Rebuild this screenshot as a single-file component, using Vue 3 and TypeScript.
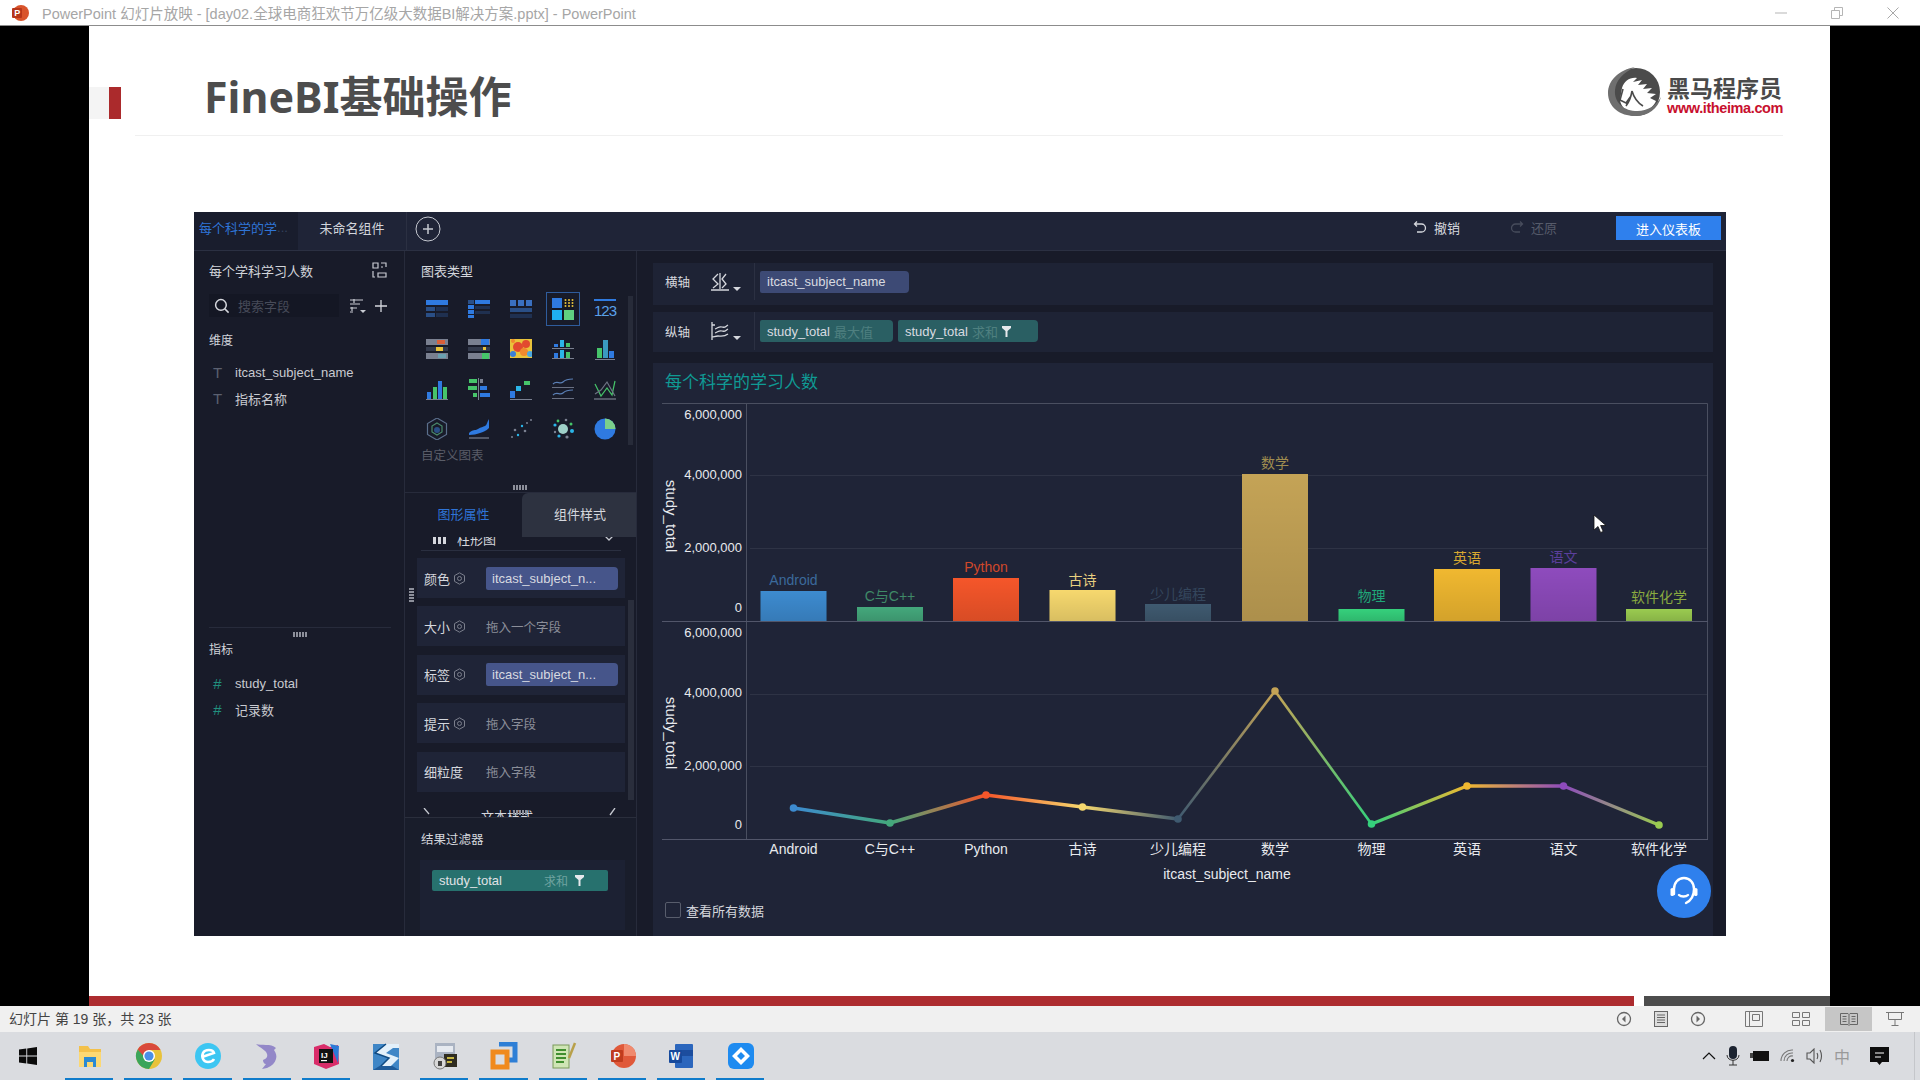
<template>
  <div class="screen">
    <div class="titlebar">
      <svg class="ppt-mini" width="18" height="18" viewBox="0 0 18 18">
        <circle cx="10" cy="9" r="8" fill="#d9542b" />
        <rect x="1" y="4" width="10" height="10" rx="1" fill="#b7361a" />
        <text x="3.2" y="12.4" font-size="9" font-weight="700" fill="#fff" font-family="Liberation Sans">P</text>
      </svg>
      <span class="title-text">PowerPoint 幻灯片放映 - [day02.全球电商狂欢节万亿级大数据BI解决方案.pptx] - PowerPoint</span>
      <div class="win-btns">
        <svg width="14" height="14" viewBox="0 0 14 14"><path d="M1 7h12" stroke="#b5b5b5" /></svg>
        <svg width="14" height="14" viewBox="0 0 14 14" fill="none" stroke="#b5b5b5"><path d="M1.5 4.5h8v8h-8zM4.5 4.5v-3h8v8h-3" /></svg>
        <svg width="14" height="14" viewBox="0 0 14 14"><path d="M1.5 1.5l11 11M12.5 1.5l-11 11" stroke="#a8a8a8" /></svg>
      </div>
    </div>

    <div class="stage">
      <div class="slide">
        <div class="slide-head">
          <div class="mark"><i></i></div>
          <h1 class="slide-title">FineBI基础操作</h1>
          <div class="logo">
            <svg width="54" height="50" viewBox="0 0 54 50">
              <circle cx="28" cy="25" r="24" fill="#4b4b4b" />
              <path d="M12 33l2-12c2-7 8-11 15-10l-4 4 9-2-4 5 9-1-4 5 9-1-5 5 9 1-6 4 6 3c-2 5-9 12-18 12-11 1-17-6-18-13z" fill="#fff" />
              <path d="M15 22l-3 11 6 3 5-7M24 24c-1 6-3 11-6 15M24 24c2 7 6 12 11 15" fill="none" stroke="#4b4b4b" stroke-width="1.6" />
              <path d="M27 0C10 3 0 14 0 26c0 14 12 23 27 23 13 0 23-7 26-19-5 9-15 15-26 14C14 43 6 34 7 23 8 13 15 6 27 0z" fill="#6f6f6f" />
            </svg>
            <div class="logo-text">
              <div class="logo-cn">黑马程序员</div>
              <div class="logo-url">www.itheima.com</div>
            </div>
          </div>
        </div>
        <div class="head-rule"></div>

        <div class="bi">
          <div class="bi-top">
            <div class="bi-tab current">每个科学的学<span class="tab-more">...</span></div>
            <div class="bi-tab">未命名组件</div>
            <div class="add-tab">
              <svg width="26" height="26" viewBox="0 0 26 26" fill="none" stroke="#c5c8d0">
                <circle cx="13" cy="13" r="12" />
                <path d="M8 13h10M13 8v10" stroke-width="1.5" />
              </svg>
            </div>
            <div class="bi-actions">
              <div class="act undo">
                <svg width="14" height="14" viewBox="0 0 14 14" fill="none" stroke="#d5d7dd" stroke-width="1.3"><path d="M4 1.5L1.5 4 4 6.5M1.5 4h7a3.8 3.8 0 0 1 0 8H4" /></svg>
                <span>撤销</span>
              </div>
              <div class="act off">
                <svg width="14" height="14" viewBox="0 0 14 14" fill="none" stroke="#474c5c" stroke-width="1.3"><path d="M10 1.5L12.5 4 10 6.5M12.5 4h-7a3.8 3.8 0 0 0 0 8H10" /></svg>
                <span>还原</span>
              </div>
              <button class="enter-btn">进入仪表板</button>
            </div>
          </div>

          <div class="bi-body">
            <aside class="fields">
              <div class="fields-upper">
                <div class="fields-title">
                  <span>每个学科学习人数</span>
                  <svg width="15" height="16" viewBox="0 0 15 16" fill="none" stroke="#c9ccd3" stroke-width="1.2"><path d="M1 6V1h5v5zM9 1h5v4M14 11v4H6v-4h8zM1 9v6h2M9 5h2" /></svg>
                </div>
                <div class="search-row">
                  <div class="search">
                    <svg width="16" height="16" viewBox="0 0 15 15" fill="none" stroke="#d5d7dd" stroke-width="1.4"><circle cx="6.5" cy="6.5" r="5" /><path d="M10.2 10.2l3.5 3.5" /></svg>
                    <span>搜索字段</span>
                  </div>
                  <svg class="sort" width="18" height="16" viewBox="0 0 18 16" fill="none" stroke="#c9ccd3" stroke-width="1.2"><path d="M1 2h13M1 6h10M1 10h7M1 14h3M5 1v4M3 9v4" /><path d="M11 12h6l-3 3z" fill="#c9ccd3" stroke="none" /></svg>
                  <svg class="plus" width="14" height="14" viewBox="0 0 14 14"><path d="M1 7h12M7 1v12" stroke="#d5d7dd" stroke-width="1.3" /></svg>
                </div>
                <div class="group-name">维度</div>
                <div class="field-row"><span class="field-t">T</span>itcast_subject_name</div>
                <div class="field-row"><span class="field-t">T</span>指标名称</div>
              </div>
              <div class="dots-h"></div>
              <div class="group-name second">指标</div>
              <div class="field-row num"><span class="field-n">#</span>study_total</div>
              <div class="field-row num"><span class="field-n">#</span>记录数</div>
            </aside>

            <section class="config">
              <div class="types">
                <div class="types-title">图表类型</div>
                <div class="type-grid">
                  <div v-for="(ic, i) in chartIcons" :key="i" class="type-cell" :class="{ picked: i === 3 }">
                    <svg width="22" height="22" viewBox="0 0 22 22">
                      <rect v-for="(r, k) in ic.r" :key="'r' + k" :x="r[0]" :y="r[1]" :width="r[2]" :height="r[3]" :fill="String(r[4])" />
                      <circle v-for="(c, k) in ic.c" :key="'c' + k" :cx="c[0]" :cy="c[1]" :r="c[2]" :fill="String(c[3])" />
                      <path v-for="(p, k) in ic.p" :key="'p' + k" :d="p[0]" :fill="p[2] || 'none'" :stroke="p[1]" stroke-width="1.2" />
                    </svg>
                    <span v-if="ic.t" class="type-num">{{ ic.t }}</span>
                  </div>
                </div>
                <div class="custom">自定义图表</div>
                <div class="dots-h small"></div>
                <div class="types-scroll"></div>
              </div>
              <div class="prop-tabs">
                <div class="prop-tab blue">图形属性</div>
                <div class="prop-tab active">组件样式</div>
              </div>
              <div class="props">
                <div class="clip-top">
                  <div class="clip-inner">
                    <svg width="14" height="12" viewBox="0 0 14 12" fill="#d5d7dd"><rect x="0" y="2" width="3" height="10" /><rect x="5" y="0" width="3" height="12" /><rect x="10" y="5" width="3" height="7" /></svg>
                    <span>柱形图</span>
                    <svg class="chev" width="12" height="8" viewBox="0 0 12 8" fill="none" stroke="#c5c8d0" stroke-width="1.3"><path d="M1 1l5 5 5-5" /></svg>
                  </div>
                </div>
                <div v-for="row in propRows" :key="row.name" class="prop-row">
                  <span class="prop-name">{{ row.name }}</span>
                  <svg v-if="row.gear" class="gear" width="13" height="13" viewBox="0 0 13 13" fill="none" stroke="#7b7f8c"><path d="M6.5 .8l5 2.85v5.7l-5 2.85-5-2.85v-5.7z" /><circle cx="6.5" cy="6.5" r="2" /></svg>
                  <span v-if="row.pill" class="prop-pill">{{ row.pill }}</span>
                  <span v-else class="prop-hint">{{ row.hint }}</span>
                </div>
                <div class="clip-bottom">
                  <svg width="8" height="8" viewBox="0 0 8 8" fill="none" stroke="#c5c8d0" stroke-width="1.3"><path d="M1 0l5 6" /></svg>
                  <span class="clip-text">文本样式</span>
                  <svg class="chev" width="8" height="8" viewBox="0 0 8 8" fill="none" stroke="#c5c8d0" stroke-width="1.3"><path d="M1 7l5-7" /></svg>
                </div>
                <div class="props-scroll"></div>
              </div>
              <div class="dots-v"></div>
              <div class="dots-h lower"></div>
              <div class="filter-box">
                <div class="filter-title">结果过滤器</div>
                <div class="filter-well">
                  <div class="filter-pill">
                    <span>study_total</span>
                    <em>求和</em>
                    <svg width="9" height="11" viewBox="0 0 9 11" fill="#e6e8ec"><path d="M0 0h9v2L5.5 5v6h-2V5L0 2z" /></svg>
                  </div>
                </div>
              </div>
            </section>

            <main class="canvas">
              <div class="axis-row first">
                <span class="axis-name">横轴</span>
                <svg class="axis-ic" width="20" height="20" viewBox="0 0 20 20" fill="none" stroke="#d5d7dd" stroke-width="1.3"><path d="M8 2L3 7l5 5-5 4M16 2l-4 5 4 5-4 4M1 18h18M10 1v16" /></svg>
                <i class="caret"></i>
                <div class="axis-slots">
                  <span class="pill dim-pill wide">itcast_subject_name</span>
                </div>
              </div>
              <div class="axis-row second">
                <span class="axis-name">纵轴</span>
                <svg class="axis-ic" width="20" height="20" viewBox="0 0 20 20" fill="none" stroke="#d5d7dd" stroke-width="1.3"><path d="M2 1v18M5 8c3-1 4-3 7-2s3 0 6-2M5 12c3-1 4-3 7-2s3 0 6-2M2 4h3M2 16c2 0 3-1 6-1s6 1 10-2" /></svg>
                <i class="caret"></i>
                <div class="axis-slots">
                  <span class="pill val-pill">study_total <em>最大值</em></span>
                  <span class="pill val-pill">study_total <em>求和</em>
                    <svg width="9" height="11" viewBox="0 0 9 11" fill="#e6e8ec"><path d="M0 0h9v2L5.5 5v6h-2V5L0 2z" /></svg>
                  </span>
                </div>
              </div>

              <div class="card">
                <div class="card-title">每个科学的学习人数</div>
                <svg class="plot" width="1059" height="496" viewBox="653 403 1059 496" font-family="Liberation Sans, Noto Sans CJK SC, sans-serif">
                  <defs>
                    <linearGradient id="shade" x1="0" y1="0" x2="0" y2="1">
                      <stop offset="0" stop-color="#000" stop-opacity="0" />
                      <stop offset="1" stop-color="#000" stop-opacity=".12" />
                    </linearGradient>
                    <linearGradient v-for="s in segments" :id="s.id" :key="s.id" gradientUnits="userSpaceOnUse" :x1="s.x1" :y1="s.y1" :x2="s.x2" :y2="s.y2">
                      <stop offset="0" :stop-color="s.c1" />
                      <stop offset="1" :stop-color="s.c2" />
                    </linearGradient>
                  </defs>

                  <path d="M662 403.5H1707.5V839M746.5 403V839" fill="none" stroke="#4a4f60" />
                  <path d="M750 475.5H1707M750 548.5H1707M750 694.5H1707M750 766.5H1707" stroke="#2e3345" />
                  <path d="M662 621.5H1708M662 839.5H1708" stroke="#52566a" />

                  <text v-for="t in ticks" :key="t.y" x="742" :y="t.y" text-anchor="end" font-size="13" fill="#e8eaee">{{ t.label }}</text>
                  <text transform="translate(666 516) rotate(90)" text-anchor="middle" font-size="15" fill="#e8eaee">study_total</text>
                  <text transform="translate(666 733) rotate(90)" text-anchor="middle" font-size="15" fill="#e8eaee">study_total</text>

                  <g v-for="c in cats" :key="c.name">
                    <rect :x="c.x - 33" :y="c.top" width="66" :height="621 - c.top" :fill="c.color" />
                    <rect :x="c.x - 33" :y="c.top" width="66" :height="621 - c.top" fill="url(#shade)" />
                    <text :x="c.x" :y="c.labelY + 5" text-anchor="middle" font-size="14" :fill="c.labelColor">{{ c.name }}</text>
                    <text :x="c.x" y="854" text-anchor="middle" font-size="14" fill="#e8eaee">{{ c.name }}</text>
                  </g>

                  <line v-for="s in segments" :key="'l' + s.id" :x1="s.x1" :y1="s.y1" :x2="s.x2" :y2="s.y2" :stroke="`url(#${s.id})`" :stroke-width="s.w" />
                  <circle v-for="c in cats" :key="'d' + c.name" :cx="c.x" :cy="c.lineY" r="3.8" :fill="c.color" />

                  <text x="1227" y="879" text-anchor="middle" font-size="14" fill="#e8eaee">itcast_subject_name</text>
                </svg>
                <label class="see-all"><i class="box"></i>查看所有数据</label>

                <div class="help">
                  <svg width="32" height="34" viewBox="0 0 32 34" fill="none" stroke="#fff" stroke-width="2.4">
                    <path d="M6 20V15C6 9 10 4 16 4s10 5 10 11c0 6-2 11-8 14" stroke-linecap="round" />
                    <rect x="2.5" y="14" width="3.5" height="8" rx="1.6" fill="#fff" stroke="none" />
                    <rect x="26" y="14" width="3.5" height="8" rx="1.6" fill="#fff" stroke="none" />
                    <path d="M11 21c2 2 7 2 9 0" stroke-linecap="round" />
                  </svg>
                </div>
                <svg class="pointer" width="14" height="20" viewBox="0 0 14 20"><path d="M1 1v15l4-3.5 2.6 6 2.6-1.1-2.6-5.9H13z" fill="#fff" stroke="#111" stroke-width=".8" /></svg>
              </div>
            </main>
          </div>
        </div>
      </div>
    </div>

    <div class="progress"><i></i><b></b></div>

    <div class="statusbar">
      <span>幻灯片 第 19 张，共 23 张</span>
      <div class="views">
        <svg width="16" height="16" viewBox="0 0 16 16" fill="none" stroke="#666" stroke-width="1.3"><circle cx="8" cy="8" r="6.5" /><path d="M9.5 4.5L6 8l3.5 3.5z" fill="#666" stroke="none" /></svg>
        <svg width="14" height="16" viewBox="0 0 14 16" fill="none" stroke="#666"><rect x=".5" y=".5" width="13" height="15" fill="#ddd" /><path d="M3 4h8M3 6.5h8M3 9h8M3 11.5h8" /></svg>
        <svg width="16" height="16" viewBox="0 0 16 16" fill="none" stroke="#666" stroke-width="1.3"><circle cx="8" cy="8" r="6.5" /><path d="M6.5 4.5L10 8l-3.5 3.5z" fill="#666" stroke="none" /></svg>
        <svg width="18" height="16" viewBox="0 0 18 16" fill="none" stroke="#777"><path d="M.5.5h17v15H.5zM4.5.5v15M7.5 3.5h7v6h-7z" /></svg>
        <svg width="18" height="16" viewBox="0 0 18 16" fill="none" stroke="#777"><path d="M.5 1.5h7v5h-7zM10.5 1.5h7v5h-7zM.5 9.5h7v5h-7zM10.5 9.5h7v5h-7z" /></svg>
        <div class="view-on">
          <svg width="18" height="16" viewBox="0 0 18 16" fill="none" stroke="#666"><path d="M.5 2.5h7.5l1 1 1-1h7.5v11h-7.5l-1 1-1-1H.5zM9 3.5v10M2.5 5.5h4M2.5 8h4M2.5 10.5h4M11.5 5.5h4M11.5 8h4M11.5 10.5h4" /></svg>
        </div>
        <svg width="18" height="16" viewBox="0 0 18 16" fill="none" stroke="#777"><path d="M0 1.5h18M2.5 1.5v7h13v-7M9 8.5v6M5.5 14.5h7" /></svg>
      </div>
    </div>

    <div class="taskbar">
      <div class="start">
        <svg width="18" height="18" viewBox="0 0 18 18" fill="#0b0b0b"><path d="M0 2.6l7.3-1v7H0zM8.2 1.4L18 0v8.6H8.2zM0 9.4h7.3v7l-7.3-1zM8.2 9.4H18V18l-9.8-1.4z" /></svg>
      </div>
      <div v-for="(app, i) in apps" :key="i" class="task-app" :class="{ open: app }">
        <svg v-if="i === 0" width="28" height="28" viewBox="0 0 28 28"><path d="M3 4h9l2 3h11v18H3z" fill="#f3c14b" /><rect x="3" y="10" width="22" height="15" fill="#fbd874" /><rect x="8" y="15" width="12" height="10" fill="#2a8ad4" /><rect x="11" y="20" width="6" height="5" fill="#fbd874" /></svg>
        <svg v-else-if="i === 1" width="28" height="28" viewBox="0 0 28 28"><circle cx="14" cy="14" r="13" fill="#e8c23a" /><path d="M14 1a13 13 0 0 0-11.3 6.5L9 18 14 8h11.5A13 13 0 0 0 14 1z" fill="#d9493c" /><path d="M2.7 7.5A13 13 0 0 0 14 27l6-10-6 3z" fill="#3ba55a" /><circle cx="14" cy="14" r="6" fill="#fff" /><circle cx="14" cy="14" r="4.6" fill="#4a8fe8" /></svg>
        <svg v-else-if="i === 2" width="28" height="28" viewBox="0 0 28 28"><circle cx="14" cy="14" r="13" fill="#3dc6f2" /><path d="M8 15l12-4c-1-4-9-4-11 0-2 5 1 9 5 9 3 0 5-1 6-3" fill="none" stroke="#fff" stroke-width="2.6" /></svg>
        <svg v-else-if="i === 3" width="28" height="28" viewBox="0 0 28 28"><path d="M3 2c5 2 15-1 20 4l-2 2c2 3 3 6 2 9-1 4-4 7-9 9l-5 1 4-5c-2 0-3-2-3-4 3-1 5-3 4-6C13 8 7 6 3 2z" fill="#9388c8" /></svg>
        <svg v-else-if="i === 4" width="28" height="28" viewBox="0 0 28 28"><path d="M2 5l10-3 6 3 8-2 1 19-13 5-12-5z" fill="#d92d6a" /><path d="M18 2l9 2-1 17z" fill="#2b7ad8" /><rect x="7" y="7" width="14" height="14" fill="#111" /><text x="9" y="16" font-size="8" font-weight="700" fill="#fff" font-family="Liberation Sans">IJ</text><rect x="9" y="18" width="6" height="1.2" fill="#fff" /></svg>
        <svg v-else-if="i === 5" width="28" height="28" viewBox="0 0 28 28"><rect x="1" y="2" width="26" height="26" fill="#3f86c6" /><path d="M1 28L14 20 27 28z" fill="#1f5b99" /><path d="M27 2H14L3 11l14 5-8 8h10l8-8-13-5 7-5h6z" fill="#e3f0fa" /><path d="M14 2L3 11l14 5-8 8" fill="none" stroke="#0f4a82" stroke-width="1.5" /></svg>
        <svg v-else-if="i === 6" width="28" height="28" viewBox="0 0 28 28"><rect x="4" y="1" width="20" height="24" fill="#aab3c2" /><rect x="6" y="4" width="16" height="6" fill="#e6eaf0" /><rect x="13" y="12" width="13" height="13" fill="#2f2d22" /><path d="M16 16h7M16 20h5" stroke="#c7b743" stroke-width="2" /><circle cx="9" cy="21" r="6" fill="#d8d8d8" stroke="#777" /><rect x="7" y="19" width="4" height="5" fill="#444" /></svg>
        <svg v-else-if="i === 7" width="28" height="28" viewBox="0 0 28 28" fill="none"><path d="M9 2h16v16h-6" stroke="#2e7fd6" stroke-width="5" /><path d="M3 10h14v15H3z" stroke="#f08a1d" stroke-width="5" /></svg>
        <svg v-else-if="i === 8" width="28" height="28" viewBox="0 0 28 28"><rect x="4" y="3" width="16" height="23" fill="#cfe5b5" stroke="#7b9a5a" /><path d="M7 8h10M7 12h10M7 16h10M7 20h8" stroke="#3f8f2f" stroke-width="2" /><path d="M20 16L26 1" stroke="#b8a04a" stroke-width="2.5" /></svg>
        <svg v-else-if="i === 9" width="28" height="28" viewBox="0 0 28 28"><circle cx="16" cy="14" r="12" fill="#e0593a" /><path d="M16 2a12 12 0 0 1 12 12H16z" fill="#f08a6e" /><rect x="3" y="8" width="12" height="12" rx="1" fill="#c03c1e" /><text x="5.5" y="17.5" font-size="10" font-weight="700" fill="#fff" font-family="Liberation Sans">P</text></svg>
        <svg v-else-if="i === 10" width="28" height="28" viewBox="0 0 28 28"><rect x="8" y="2" width="18" height="24" rx="1" fill="#2b66bd" /><path d="M8 8h18v6H8z" fill="#1c4d9e" /><rect x="2" y="8" width="13" height="13" rx="1" fill="#174a9c" /><text x="3.4" y="18" font-size="10" font-weight="700" fill="#fff" font-family="Liberation Sans">W</text></svg>
        <svg v-else width="28" height="28" viewBox="0 0 28 28"><rect x="1" y="1" width="26" height="26" rx="6" fill="#1e8bf0" /><path d="M14 5l9 9-9 9-9-9zM14 10l-4 4 4 4 4-4z" fill="#fff" fill-rule="evenodd" /></svg>
      </div>

      <div class="tray">
        <svg width="14" height="8" viewBox="0 0 14 8" fill="none" stroke="#111" stroke-width="1.2"><path d="M1 7l6-6 6 6" /></svg>
        <svg width="14" height="20" viewBox="0 0 14 20"><rect x="3" y="0" width="8" height="13" rx="4" fill="#1b2330" /><path d="M1 9c0 7 12 7 12 0M7 14v5M3 19h8" fill="none" stroke="#333" /></svg>
        <svg width="20" height="12" viewBox="0 0 20 12"><rect x="3" y="1" width="16" height="10" fill="#111" /><rect x="0" y="3" width="3" height="5" fill="#444" /></svg>
        <svg width="16" height="14" viewBox="0 0 16 14" fill="none" stroke="#777" stroke-width="1.1"><path d="M1 12a11 11 0 0 1 12-11M4 12a8 8 0 0 1 9-8M7 12a5 5 0 0 1 6-5" /><circle cx="12.5" cy="11.5" r="1.6" fill="#222" stroke="none" /></svg>
        <svg width="18" height="16" viewBox="0 0 18 16" fill="none" stroke="#555" stroke-width="1.1"><path d="M1 5h3l4-4v14l-4-4H1zM11 5c1 2 1 4 0 6M14 2c2 4 2 8 0 12" /></svg>
        <span class="ime">中</span>
        <svg class="notice" width="19" height="19" viewBox="0 0 19 19"><path d="M0 0h19v15h-7l-2.5 3L7 15H0z" fill="#0d0d0d" /><path d="M5 6h9M5 10h6" stroke="#fff" /></svg>
      </div>
    </div>
  </div>
</template>

<script setup lang="ts">
type IconDef = {
  r?: (number | string)[][];
  c?: (number | string)[][];
  p?: string[][];
  t?: string;
};

const B = "#2f7ae0";
const D = "#2a4f86";
const S = "#1f3050";
const G = "#46c46a";
const Y = "#e9c33b";
const L = "#7a8090";
const O = "#d9603a";
const C = "#2bb5e8";
const A = "#6e7484";

const chartIcons: IconDef[] = [
  { r: [[0, 2, 22, 5, B], [0, 9, 9, 4, D], [10, 9, 12, 4, S], [0, 15, 9, 4, D], [10, 15, 12, 4, S]] },
  { r: [[0, 2, 6, 4, D], [7, 2, 15, 4, B], [0, 7, 6, 4, B], [0, 12, 6, 4, B], [0, 17, 6, 3, B], [7, 8, 15, 3, S], [7, 13, 15, 3, S]] },
  { r: [[0, 2, 6, 6, "#3a70c0"], [8, 2, 6, 6, "#3a70c0"], [16, 2, 6, 6, "#3a70c0"], [0, 10, 22, 4, D], [0, 16, 22, 4, S]] },
  {
    r: [[0, 0, 10, 10, B], [0, 12, 10, 10, "#1fb0f0"], [12, 12, 10, 10, "#60d080"]],
    c: [[13.5, 2, 1, Y], [17, 2, 1, Y], [20.5, 2, 1, Y], [13.5, 5, 1, Y], [17, 5, 1, Y], [20.5, 5, 1, Y], [13.5, 8, 1, Y], [17, 8, 1, Y], [20.5, 8, 1, Y]],
  },
  { r: [[0, 1, 22, 2, B]], t: "123" },
  { r: [[0, 1, 22, 6, L], [11, 2, 8, 4, O], [0, 9, 22, 4, "#333a4c"], [10, 9, 7, 4, Y], [0, 15, 22, 6, L], [12, 16, 8, 4, "#6aa0b0"]] },
  { r: [[0, 1, 22, 6, L], [13, 1, 8, 6, B], [0, 9, 22, 4, "#333a4c"], [15, 9, 3, 3, Y], [0, 15, 22, 6, L], [14, 15, 7, 6, G]] },
  {
    r: [[0, 1, 22, 19, Y]],
    c: [[8, 9, 5, "#e2492f"], [16, 6, 4, "#e2492f"], [14, 14, 4, "#f08a2e"], [3, 16, 3, "#3a7fd6"], [20, 16, 3, "#4aa8e0"], [3, 3, 2, "#f08a2e"]],
  },
  { r: [[2, 6, 4, 3, B], [8, 2, 4, 7, C], [14, 5, 4, 4, G], [0, 10, 22, 1, L], [2, 15, 4, 5, B], [8, 12, 4, 8, C], [14, 14, 4, 6, G], [0, 20, 22, 1, L]] },
  { r: [[3, 10, 5, 10, G], [9, 2, 5, 18, "#3a9ac0"], [15, 13, 5, 7, B], [1, 21, 20, 1, L]] },
  { r: [[1, 14, 4, 7, B], [7, 9, 4, 12, G], [12, 3, 4, 18, B], [17, 9, 4, 12, G], [0, 21, 22, 1, L]] },
  { r: [[1, 1, 8, 4, G], [12, 1, 3, 4, L], [0, 8, 9, 4, G], [12, 8, 7, 4, B], [5, 15, 4, 4, G], [12, 15, 10, 4, B], [10, 0, 1, 22, L]] },
  { r: [[0, 13, 5, 7, B], [6, 8, 5, 5, C], [14, 3, 6, 4, G], [0, 21, 22, 1, L]] },
  { p: [["M1 6c4-4 7 1 10-2s6-3 10-3", "#5a7fb5"], ["M1 17c4-4 7 1 10-2s6-3 10-3", "#5a7fb5"], ["M0 9.500h22M0 20.500h22", "#6a7082"]] },
  { p: [["M1 6l6 12 6-8 5 7 3-14", G], ["M1 16l6-4 6-8 8 14", A], ["M0 21h22", L]] },
  {
    p: [["M11 0l9.500 5.500v11L11 22 1.500 16.500v-11z", "#5b6f8c"], ["M11 5l5 3v6l-5 3-5-3V8z", "#4b8a6c"]],
    c: [[11, 12, 3, "#2a4f86"]],
  },
  { p: [["M1 15c4-4 6-2 9-4s5-2 7-3 2-4 4-7v9c-3 3-6 4-9 5s-7 2-11 2z", "none", B], ["M1 20h20", L]] },
  { c: [[2, 19, 1, L], [5, 12, 1.3, L], [8, 17, 1.2, C], [12, 8, 1.2, C], [15, 13, 1.3, L], [17, 5, 1, L], [21, 2, 1, L]] },
  { c: [[11, 11, 5, "#9fd0c8"], [3, 7, 1.6, C], [6, 3, 1.4, G], [14, 2, 1.3, L], [19, 6, 1.5, G], [20, 13, 2, C], [15, 19, 1.6, L], [7, 18, 1.6, C], [3, 14, 1.2, L]] },
  {
    c: [[11, 11, 10.5, B]],
    p: [["M11 11V0.5A10.5 10.5 0 0 1 21.5 11z", "none", "#7bd08a"]],
  },
];

const propRows = [
  { name: "颜色", gear: true, pill: "itcast_subject_n..." },
  { name: "大小", gear: true, hint: "拖入一个字段" },
  { name: "标签", gear: true, pill: "itcast_subject_n..." },
  { name: "提示", gear: true, hint: "拖入字段" },
  { name: "细粒度", gear: false, hint: "拖入字段" },
];

const ticks = [
  { y: 419, label: "6,000,000" },
  { y: 479, label: "4,000,000" },
  { y: 552, label: "2,000,000" },
  { y: 612, label: "0" },
  { y: 637, label: "6,000,000" },
  { y: 697, label: "4,000,000" },
  { y: 770, label: "2,000,000" },
  { y: 829, label: "0" },
];

const cats = [
  { name: "Android", x: 793.5, top: 591, labelY: 580, lineY: 808, color: "#3d8bd0", labelColor: "#3b6a9c" },
  { name: "C与C++", x: 890, top: 607, labelY: 596, lineY: 823, color: "#44a87c", labelColor: "#3f8a68" },
  { name: "Python", x: 986, top: 578, labelY: 567, lineY: 795, color: "#f5562a", labelColor: "#d0482a" },
  { name: "古诗", x: 1082.5, top: 590, labelY: 580, lineY: 807, color: "#f6d86e", labelColor: "#e8d080" },
  { name: "少儿编程", x: 1178, top: 604, labelY: 594, lineY: 819, color: "#3f5a70", labelColor: "#34465c" },
  { name: "数学", x: 1275, top: 474, labelY: 463, lineY: 691, color: "#c4a356", labelColor: "#a08d50" },
  { name: "物理", x: 1371.5, top: 609, labelY: 596, lineY: 824, color: "#35d07c", labelColor: "#1fa878" },
  { name: "英语", x: 1467, top: 569, labelY: 558, lineY: 786, color: "#f0b830", labelColor: "#d8a830" },
  { name: "语文", x: 1563.5, top: 568, labelY: 557, lineY: 786, color: "#8e4bbd", labelColor: "#5b3f9c" },
  { name: "软件化学", x: 1659, top: 609, labelY: 597, lineY: 825, color: "#9acb50", labelColor: "#8aaa40" },
];

// line segments fade from one category colour to the next
const segments = cats.slice(0, -1).map((c, i) => {
  const n = cats[i + 1];
  return {
    id: `seg${i}`,
    x1: c.x,
    y1: c.lineY,
    x2: n.x,
    y2: n.lineY,
    c1: c.color,
    c2: n.color,
    w: Math.abs(n.lineY - c.lineY) > 60 ? 2.6 : 3.4,
  };
});

// true = window is open, so the taskbar shows the blue underline
const apps = [true, true, true, true, true, false, true, true, true, true, true, true];
</script>

<style>
html,
body {
  margin: 0;
  background: #000;
  overflow: hidden;
}
</style>

<style scoped>
.screen {
  width: 1920px;
  height: 1080px;
  display: flex;
  flex-direction: column;
  font-family: "Liberation Sans", "Noto Sans CJK SC", sans-serif;
  background: #000;
}

.titlebar {
  height: 26px;
  box-sizing: border-box;
  display: flex;
  align-items: center;
  background: #fff;
  border-bottom: 1px solid #8c8c8c;
  padding-left: 11px;
}
.ppt-mini {
  flex: none;
}
.title-text {
  margin-left: 13px;
  font-size: 14.5px;
  color: #a6a6a6;
  white-space: nowrap;
}
.win-btns {
  margin-left: auto;
  display: flex;
  gap: 42px;
  padding-right: 20px;
}

.stage {
  height: 970px;
  padding: 0 90px 0 89px;
}
.slide {
  width: 1741px;
  height: 970px;
  background: #fff;
}
.slide-head {
  height: 109px;
  display: flex;
  align-items: flex-start;
}
.mark {
  width: 20px;
  height: 32px;
  margin-top: 61px;
  background: #f4f4f4;
  position: relative;
  flex: none;
  padding-right: 12px;
}
.mark i {
  position: absolute;
  left: 20px;
  top: 0;
  width: 12px;
  height: 32px;
  background: #ab2a2c;
}
.slide-title {
  margin: 41px 0 0 83px;
  font-size: 43px;
  line-height: 60px;
  font-weight: 700;
  color: #4d4d4d;
  font-family: "Noto Sans", "Noto Sans CJK SC", sans-serif;
}
.logo {
  margin: 41px 47px 0 auto;
  display: flex;
  gap: 5px;
}
.logo-text {
  margin-top: 7px;
}
.logo-cn {
  font-size: 23px;
  line-height: 26px;
  font-weight: 700;
  color: #4a4a4a;
  font-family: "Noto Sans CJK SC", sans-serif;
}
.logo-url {
  font-size: 14.5px;
  line-height: 16px;
  color: #c8102e;
  font-weight: 700;
  letter-spacing: -0.4px;
}
.head-rule {
  height: 1px;
  margin: 0 47px 0 46px;
  background: #f0f0f0;
}

.bi {
  width: 1532px;
  height: 724px;
  margin: 76px 0 0 105px;
  background: #181b29;
  display: flex;
  flex-direction: column;
  color: #d5d7dd;
  font-size: 13px;
}
.bi-top {
  height: 39px;
  flex: none;
  box-sizing: border-box;
  display: flex;
  align-items: stretch;
  background: #1f2437;
  border-bottom: 1px solid #2b3042;
}
.bi-tab {
  display: flex;
  align-items: center;
  justify-content: center;
  width: 109px;
  border-right: 1px solid #2b3042;
  box-sizing: border-box;
  padding-bottom: 8px;
  color: #d2d5db;
}
.bi-tab.current {
  width: 104px;
  background: #191d2d;
  color: #2f74d6;
  justify-content: flex-start;
  padding-left: 5px;
  border-right: 0;
}
.tab-more {
  color: #34425e;
}
.add-tab {
  display: flex;
  align-items: center;
  padding: 0 0 5px 8px;
}
.bi-actions {
  margin-left: auto;
  display: flex;
  align-items: center;
  padding: 0 5px 6px 0;
}
.act {
  display: flex;
  align-items: center;
  gap: 7px;
  margin: 0 59px 2px 0;
}
.act.undo {
  margin-right: 50px;
}
.act.off {
  color: #565b6a;
}
.enter-btn {
  width: 105px;
  height: 24px;
  border: 0;
  padding: 0;
  background: #2f80ed;
  color: #fff;
  font: inherit;
}

.bi-body {
  flex: 1;
  display: flex;
  min-height: 0;
}

.fields {
  width: 211px;
  flex: none;
  box-sizing: border-box;
  border-right: 1px solid #272b3b;
  padding: 10px 13px 0 15px;
}
.fields-upper {
  height: 367px;
  box-sizing: border-box;
  border-bottom: 1px solid #272b3b;
}
.fields-title {
  height: 18px;
  display: flex;
  align-items: center;
  justify-content: space-between;
  color: #d2d5db;
  padding-right: 4px;
}
.search-row {
  display: flex;
  align-items: center;
  margin-top: 15px;
}
.search {
  width: 130px;
  height: 23px;
  box-sizing: border-box;
  padding-left: 5px;
  display: flex;
  align-items: center;
  gap: 8px;
  background: #141724;
  font-size: 13px;
  color: #474b59;
}
.sort {
  margin-left: 10px;
}
.plus {
  margin-left: 7px;
}
.group-name {
  margin-top: 14px;
  line-height: 20px;
  font-size: 12px;
  color: #d2d5db;
}
.group-name.second {
  margin-top: 3px;
}
.field-row {
  height: 25.5px;
  display: flex;
  align-items: center;
  font-size: 13px;
  color: #c8cad0;
}
.group-name + .field-row {
  margin-top: 9px;
}
.group-name.second + .field-row {
  margin-top: 10px;
}
.field-row.num {
  height: 26.5px;
}
.field-t,
.field-n {
  width: 26px;
  padding-left: 4px;
  box-sizing: border-box;
  font-size: 15px;
  color: #5b6070;
  flex: none;
}
.field-n {
  color: #21907e;
  font-style: italic;
}
.dots-h {
  width: 14px;
  height: 5px;
  margin: 4px auto 0;
  background: repeating-linear-gradient(90deg, #8d909b 0 2px, transparent 2px 3px);
}

.config {
  width: 232px;
  flex: none;
  box-sizing: border-box;
  border-right: 1px solid #272b3b;
  display: flex;
  flex-direction: column;
  position: relative;
}
.types {
  height: 242px;
  flex: none;
  box-sizing: border-box;
  padding: 11px 0 0 16px;
  position: relative;
  border-bottom: 1px solid #272b3b;
}
.types-title {
  line-height: 20px;
  font-size: 13px;
}
.type-grid {
  margin: 7px 0 0 -5px;
  display: grid;
  grid-template-columns: repeat(5, 42px);
  grid-auto-rows: 40px;
}
.type-cell {
  display: flex;
  align-items: center;
  justify-content: center;
  position: relative;
}
.type-cell.picked svg {
  outline: 1px solid #2f5c9c;
  outline-offset: 5px;
  background: #141724;
}
.type-num {
  position: absolute;
  left: 0;
  right: 0;
  top: 14px;
  text-align: center;
  font-size: 15px;
  line-height: 15px;
  letter-spacing: -1px;
  color: #5aa0e8;
}
.custom {
  font-size: 12.5px;
  line-height: 14px;
  color: #5a5d68;
}
.dots-h.small {
  position: absolute;
  left: 108px;
  bottom: 2px;
  margin: 0;
}
.dots-h.lower {
  position: absolute;
  left: 108px;
  top: 559px;
  margin: 0;
}
.types-scroll {
  position: absolute;
  right: 3px;
  top: 45px;
  width: 5px;
  height: 149px;
  background: #272b39;
}
.prop-tabs {
  height: 44px;
  flex: none;
  display: flex;
}
.prop-tab {
  display: flex;
  align-items: center;
  justify-content: center;
  padding-bottom: 3px;
  box-sizing: border-box;
}
.prop-tab.blue {
  width: 117px;
  color: #2f74d6;
}
.prop-tab.active {
  flex: 1;
  padding-left: 2px;
  background: #2d3240;
  border-top-left-radius: 6px;
  color: #d5d7dd;
}
.props {
  height: 280px;
  flex: none;
  overflow: hidden;
  padding-left: 12px;
  position: relative;
}
.clip-top {
  height: 13px;
  width: 200px;
  margin-left: 4px;
  overflow: hidden;
  border-bottom: 1px solid #2a2f40;
}
.clip-inner {
  display: flex;
  align-items: center;
  gap: 10px;
  margin-top: -9px;
  height: 20px;
  padding-left: 12px;
}
.chev {
  margin-left: auto;
  margin-right: 6px;
}
.prop-row {
  width: 208px;
  height: 40px;
  margin-top: 8.4px;
  display: flex;
  align-items: center;
  box-sizing: border-box;
  padding-left: 7px;
  background: #1f2437;
}
.clip-top + .prop-row {
  margin-top: 7px;
}
.prop-name {
  font-size: 13px;
}
.gear {
  margin-left: 3px;
}
.prop-pill,
.prop-hint {
  position: absolute;
  left: 81px;
  font-size: 12.5px;
}
.prop-pill {
  width: 132px;
  height: 23px;
  line-height: 23px;
  box-sizing: border-box;
  padding-left: 6px;
  background: #46558a;
  border-radius: 2px 4px 4px 2px;
  font-size: 13px;
  color: #d8dae0;
}
.prop-hint {
  color: #8b8e99;
}
.clip-bottom {
  margin-top: 16px;
  width: 200px;
  height: 9px;
  overflow: hidden;
  padding-left: 6px;
  display: flex;
  align-items: flex-start;
}
.clip-text {
  margin-left: 50px;
  font-size: 13px;
  line-height: 18px;
}
.props-scroll {
  position: absolute;
  left: 223px;
  top: 63px;
  width: 6px;
  height: 200px;
  background: #2a2e3c;
}
.dots-v {
  position: absolute;
  left: 4px;
  top: 337px;
  width: 5px;
  height: 14px;
  background: repeating-linear-gradient(180deg, #8d909b 0 2px, transparent 2px 3px);
}
.filter-box {
  flex: 1;
  background: #191d2b;
  border-top: 1px solid #2a2e3c;
  padding-left: 16px;
}
.filter-title {
  line-height: 20px;
  margin-top: 12px;
  font-size: 12.5px;
}
.filter-well {
  width: 205px;
  height: 70px;
  margin: 10px 0 0 -1px;
  box-sizing: border-box;
  padding: 10px 17px 0 12px;
  background: #1c2133;
}
.filter-pill {
  height: 21px;
  display: flex;
  align-items: center;
  padding-left: 7px;
  background: #27716e;
  border-radius: 2px;
  color: #e0e2e6;
}
.filter-pill em {
  margin-left: 42px;
  font-style: normal;
  font-size: 12px;
  color: #6fa3a0;
}
.filter-pill svg {
  margin-left: 7px;
}

.canvas {
  flex: 1;
  min-width: 0;
  padding: 12px 13px 0 16px;
  display: flex;
  flex-direction: column;
}
.axis-row {
  height: 42px;
  flex: none;
  display: flex;
  align-items: center;
  background: #1e2335;
  padding-left: 12px;
  box-sizing: border-box;
}
.axis-row.first {
  padding-bottom: 5px;
}
.axis-row.second {
  height: 40px;
  margin-top: 7px;
  padding-bottom: 2px;
}
.axis-name {
  width: 45px;
  font-size: 12.5px;
  flex: none;
}
.axis-ic {
  flex: none;
}
.caret {
  width: 0;
  height: 0;
  margin: 14px 0 0 3px;
  border: 4px solid transparent;
  border-top-color: #d5d7dd;
  border-bottom: 0;
}
.axis-slots {
  margin-left: 13px;
  padding-left: 5px;
  height: 100%;
  border-left: 1px solid #2b3042;
  display: flex;
  align-items: center;
  gap: 5px;
}
.pill {
  height: 22px;
  display: inline-flex;
  align-items: center;
  gap: 4px;
  box-sizing: border-box;
  padding: 0 7px;
  border-radius: 2px 4px 4px 2px;
  color: #d8dae0;
  white-space: nowrap;
}
.dim-pill {
  background: #3d4a75;
}
.dim-pill.wide {
  width: 149px;
}
.val-pill {
  background: #2a5f63;
}
.val-pill:first-child {
  width: 133px;
}
.val-pill:last-child {
  width: 140px;
}
.val-pill em {
  font-style: normal;
  font-size: 13px;
  color: #4f8080;
}

.card {
  flex: 1;
  margin-top: 11px;
  background: #1f2437;
  position: relative;
  min-height: 0;
}
.card-title {
  height: 40px;
  box-sizing: border-box;
  padding-left: 12px;
  line-height: 40px;
  font-size: 17px;
  color: #0f9a94;
}
.plot {
  display: block;
}
.see-all {
  display: flex;
  align-items: center;
  gap: 5px;
  height: 16px;
  margin: 3px 0 0 12px;
  font-size: 13px;
}
.box {
  width: 16px;
  height: 16px;
  box-sizing: border-box;
  border: 1px solid #585d6c;
  border-radius: 2px;
}
.help {
  position: absolute;
  left: 1004px;
  top: 501px;
  width: 54px;
  height: 54px;
  border-radius: 50%;
  background: #2f80ed;
  display: flex;
  align-items: center;
  justify-content: center;
}
.pointer {
  position: absolute;
  left: 940px;
  top: 151px;
}

.progress {
  height: 10px;
  flex: none;
  margin: 0 90px 0 89px;
  display: flex;
  background: #fff;
}
.progress i {
  width: 1545px;
  background: #ad2c2f;
}
.progress b {
  margin-left: 10px;
  flex: 1;
  background: #4d4d4d;
}

.statusbar {
  height: 26px;
  flex: none;
  box-sizing: border-box;
  display: flex;
  align-items: center;
  background: #f0f0f0;
  padding: 0 0 2px 9px;
  font-size: 14px;
  color: #444;
}
.views {
  margin-left: auto;
  display: flex;
  align-items: center;
  height: 100%;
  margin-bottom: -2px;
}
.views > svg:nth-child(1) {
  margin-right: 22px;
}
.views > svg:nth-child(2) {
  margin-right: 22px;
}
.views > svg:nth-child(3) {
  margin-right: 39px;
}
.views > svg:nth-child(4) {
  margin-right: 29px;
}
.views > svg:nth-child(5) {
  margin-right: 15px;
}
.view-on {
  width: 47px;
  height: 100%;
  background: #c6c6c6;
  display: flex;
  align-items: center;
  justify-content: center;
  margin-right: 14px;
}
.views > svg:last-child {
  margin-right: 16px;
}

.taskbar {
  flex: 1;
  display: flex;
  align-items: stretch;
  background: #dadce0;
  position: relative;
}
.start {
  width: 60px;
  padding-right: 4px;
  box-sizing: border-box;
  flex: none;
  display: flex;
  align-items: center;
  justify-content: center;
}
.task-app {
  width: 59.2px;
  flex: none;
  display: flex;
  align-items: center;
  justify-content: center;
  position: relative;
}
.task-app.open::after {
  content: "";
  position: absolute;
  left: 5px;
  right: 6px;
  bottom: 0;
  height: 2px;
  background: #0f7ccb;
}
.tray {
  margin-left: auto;
  display: flex;
  align-items: center;
  gap: 10px;
  padding-right: 25px;
  border-right: 1px solid #c4c6ca;
  margin-right: 5px;
}
.ime {
  font-size: 16px;
  color: #999;
}
.notice {
  margin-left: 10px;
}
</style>
